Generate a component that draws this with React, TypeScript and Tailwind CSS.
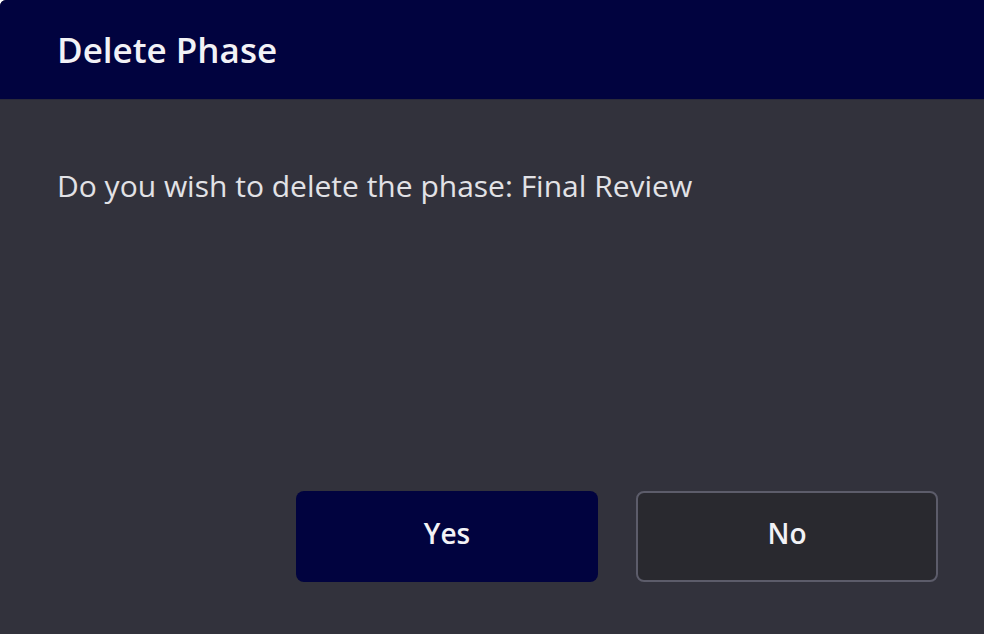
export default function App() {
  return (
    <div className="w-[984px] h-[634px] bg-[#32323c] flex flex-col overflow-hidden rounded-tl-[6px]" style={{ fontFamily: '"Open Sans", "Noto Sans", sans-serif' }}>
      <div className="h-[100px] bg-[#01033f] flex items-center px-[57px] border-b border-[#2a2a3a]">
        <span className="text-[35px] font-semibold text-[#f2f2f6] leading-none">Delete Phase</span>
      </div>
      <div className="px-[57px] pt-[71px] text-[30px] text-[#e2e2e6] leading-none">
        Do you wish to delete the phase: Final Review
      </div>
      <div className="flex-1" />
      <div className="flex justify-end gap-[38px] pr-[46px] pb-[52px]">
        <button className="w-[302px] h-[91px] pb-[8px] rounded-[8px] bg-[#01033f] text-[28px] font-semibold text-[#f2f2f6]">Yes</button>
        <button className="w-[302px] h-[91px] pb-[8px] rounded-[8px] bg-[#29292f] border-2 border-[#5c5c6a] text-[28px] font-semibold text-[#f2f2f6]">No</button>
      </div>
    </div>
  );
}
